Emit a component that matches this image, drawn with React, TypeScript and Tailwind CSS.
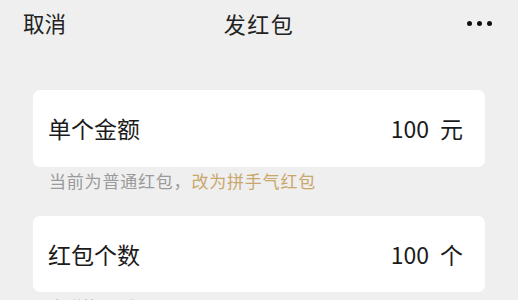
import React from "react";

export default function App() {
  return (
    <div
      className="w-[518px] h-[300px] overflow-hidden bg-[#efefef] text-[#1b1b1b]"
      style={{ fontFamily: '"Noto Sans CJK SC", "Noto Sans", sans-serif' }}
    >
      <div className="grid grid-cols-[1fr_auto_1fr] items-center h-[46px] px-[23px]">
        <div className="text-[21.5px] leading-none text-[#222]">取消</div>
        <div className="text-[22px] leading-none text-[#222] tracking-[1.5px]">发红包</div>
        <div className="flex justify-end items-center gap-[5px] pr-[3px]">
          <span className="w-[5px] h-[5px] rounded-full bg-[#111]" />
          <span className="w-[5px] h-[5px] rounded-full bg-[#111]" />
          <span className="w-[5px] h-[5px] rounded-full bg-[#111]" />
        </div>
      </div>

      <div className="px-[33px] pt-[44px]">
        <div className="h-[77px] rounded-[7px] bg-white flex items-center justify-between pl-[15px] pr-[22px]">
          <span className="text-[23px] leading-none">单个金额</span>
          <span className="flex items-center gap-[11px] text-[23px] leading-none">
            <span>100</span>
            <span>元</span>
          </span>
        </div>
        <div className="pl-[16px] pt-[2px] h-[49px] text-[17px] leading-[24px] tracking-[0.8px]">
          <span className="text-[#9a9a9a]">当前为普通红包，</span>
          <span className="text-[#c9a76c]">改为拼手气红包</span>
        </div>
        <div className="h-[76px] rounded-[7px] bg-white flex items-center justify-between pl-[15px] pr-[22px]">
          <span className="text-[23px] leading-none">红包个数</span>
          <span className="flex items-center gap-[11px] text-[23px] leading-none">
            <span>100</span>
            <span>个</span>
          </span>
        </div>
        <div className="pl-[16px] pt-[2px] text-[16px] leading-[24px] text-[#aaa]">
          本群共100人
        </div>
      </div>
    </div>
  );
}
